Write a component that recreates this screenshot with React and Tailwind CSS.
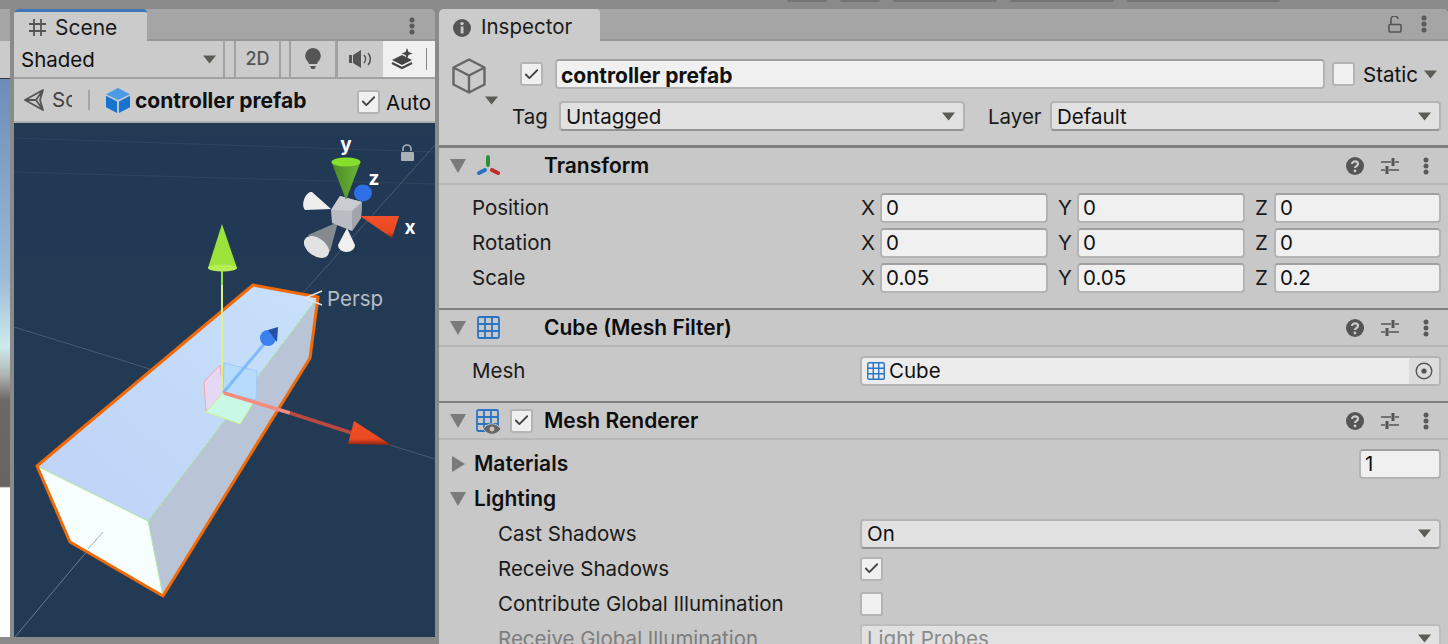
import { Check } from 'lucide-react'

function Arrow({ className = '' }) {
  return (
    <svg width="13" height="9" viewBox="0 0 13 9" className={className}>
      <path d="M0 0.5H13L6.5 8.5Z" fill="#5c5c57" />
    </svg>
  )
}

function Foldout({ open = true }) {
  return (
    <svg width="16" height="16" viewBox="0 0 16 16" className="shrink-0">
      {open
        ? <path d="M0 1H16L8 15Z" fill="#7b7b7b" />
        : <path d="M2 0L15 8L2 16Z" fill="#7b7b7b" />}
    </svg>
  )
}

function Dots({ className = '' }) {
  return (
    <svg width="6" height="18" viewBox="0 0 6 18" className={className}>
      <circle cx="3" cy="3" r="2.5" fill="#5a5a5a" />
      <circle cx="3" cy="9" r="2.5" fill="#5a5a5a" />
      <circle cx="3" cy="15" r="2.5" fill="#5a5a5a" />
    </svg>
  )
}

function Checkbox({ checked }) {
  return (
    <div className="w-[23px] h-[24px] shrink-0 rounded-[3px] border-2 border-[#b4b4b4] bg-[#f0f0f0] flex items-center justify-center">
      {checked && <Check size={17} strokeWidth={2.6} color="#444" />}
    </div>
  )
}

function GridIcon({ size = 23, color = '#2a74c4' }) {
  return (
    <svg width={size} height={size} viewBox="0 0 23 23" className="shrink-0">
      <rect x="1" y="1" width="21" height="21" rx="1.5" fill="none" stroke={color} strokeWidth="1.8" />
      <path d="M8 1V22M15 1V22M1 8H22M1 15H22" stroke={color} strokeWidth="1.8" />
    </svg>
  )
}

function HeaderIcons() {
  return (
    <div className="ml-auto flex items-center">
      <svg width="18" height="18" viewBox="0 0 18 18">
        <circle cx="9" cy="9" r="9" fill="#555" />
        <path d="M6 7C6 3.6 12 3.6 12 7C12 9 9 9 9 11" fill="none" stroke="#cbcbcb" strokeWidth="2.2" />
        <circle cx="9" cy="14" r="1.4" fill="#cbcbcb" />
      </svg>
      <svg width="18" height="18" viewBox="0 0 18 18" className="ml-[17px]">
        <path d="M0 5H10M14 5H18M0 13H4M8 13H18" stroke="#555" strokeWidth="1.6" />
        <rect x="10.5" y="1" width="3" height="8" fill="#555" />
        <rect x="4.5" y="9" width="3" height="8" fill="#555" />
      </svg>
      <Dots className="ml-[24px] mr-[19px]" />
    </div>
  )
}

function ComponentHeader({ icon, title, check }) {
  return (
    <div className="h-[35px] flex items-center pl-[11px] border-b-2 border-[#b7b7b7] box-content">
      <Foldout />
      <div className="w-[24px] ml-[10px] flex justify-center shrink-0">{icon}</div>
      <div className="w-[44px] shrink-0 pl-[10px]">{check && <Checkbox checked />}</div>
      <span className="font-semibold text-[21px] text-[#0d0d0d] whitespace-nowrap">{title}</span>
      <HeaderIcons />
    </div>
  )
}

function Field({ children, className = '' }) {
  return (
    <div className={`h-[30px] rounded-[4px] border-2 border-[#b4b4b4] border-t-[#a0a0a0] bg-[#f0f0f0] flex items-center pt-[2px] pl-[4px] text-[#111] ${className}`}>
      {children}
    </div>
  )
}

function Select({ value, className = '', muted }) {
  return (
    <div className={`h-[30px] rounded-[4px] border-2 border-[#b4b4b4] border-b-[#949494] bg-[#e1e1e1] flex items-center pl-[5px] pr-[8px] justify-between ${muted ? 'text-[#8a8a8a]' : 'text-[#111]'} ${className}`}>
      <span className="pt-[2px]">{value}</span>
      <Arrow />
    </div>
  )
}

function VecRow({ label, x, y, z }) {
  return (
    <div className="h-[35px] flex items-center pl-[33px] text-[#1a1a1a]">
      <span className="w-[388px] pt-[2px] shrink-0">{label}</span>
      {[['X', x, 'w-[168px]'], ['Y', y, 'w-[168px]'], ['Z', z, 'w-[167px]']].map(([axis, v, w]) => (
        <div key={axis} className="flex items-center w-[197px] flex-none">
          <span className="w-[20px] pl-[1px] pt-[2px] shrink-0">{axis}</span>
          <Field className={w}>{v}</Field>
        </div>
      ))}
    </div>
  )
}

function PropRow({ label, indent, muted, children }) {
  return (
    <div className={`h-[35px] flex items-center pr-[7px] ${indent ? 'pl-[59px]' : 'pl-[33px]'} ${muted ? 'text-[#7d7d7d]' : 'text-[#1a1a1a]'}`}>
      <span className={`${indent ? 'w-[362px]' : 'w-[388px]'} pt-[2px] shrink-0`}>{label}</span>
      <div className="grow">{children}</div>
    </div>
  )
}

function SceneView() {
  return (
    <div className="relative grow bg-[#223a54] overflow-hidden">
      <svg viewBox="14 123 421 514" className="absolute inset-0 w-full h-full">
        <defs>
          <linearGradient id="top" x1="0" y1="1" x2="1" y2="0">
            <stop offset="0" stopColor="#bed2f7" />
            <stop offset="1" stopColor="#c8e0fb" />
          </linearGradient>
          <linearGradient id="redcone" x1="0" y1="0" x2="0" y2="1">
            <stop offset="0" stopColor="#f2502a" />
            <stop offset="0.75" stopColor="#ea4820" />
            <stop offset="1" stopColor="#8e2412" />
          </linearGradient>
          <linearGradient id="greencone" x1="0" y1="0" x2="1" y2="0">
            <stop offset="0" stopColor="#4b8a25" />
            <stop offset="1" stopColor="#6cb536" />
          </linearGradient>
        </defs>
        {/* grid */}
        <g stroke="#5a6b7e" strokeWidth="1" opacity="0.7">
          <path d="M14 327L150 369M390 445L435 459" />
          <path d="M15 637L103 532" stroke="#8b97a4" />
          <path d="M435 145L303 293" />
          <path d="M14 138L435 152M14 172L435 184" opacity="0.35" />
        </g>
        {/* box */}
        <path d="M37 466L253 285L318 297L148 521Z" fill="url(#top)" />
        <path d="M148 521L318 297L310 358L163 596Z" fill="#b9c5d6" />
        <path d="M37 466L148 521L163 596L70 542Z" fill="#f6fffd" />
        <path d="M103 532L88 549" stroke="#aab0b6" strokeWidth="1" />
        <path d="M37 466L148 521L318 297M148 521L163 596" fill="none" stroke="#b4f0ab" strokeWidth="1" />
        <path d="M37 466L253 285L318 297L310 358L163 596L70 542Z" fill="none" stroke="#f06a08" strokeWidth="3" strokeLinejoin="round" />
        {/* move handles */}
        <path d="M204 382L220 365L223 393L206 412Z" fill="#e4d8f4" stroke="#f5a8a8" />
        <path d="M224 363L257 371L256 400L223 393Z" fill="#b7dcfb" stroke="#9dc8f8" />
        <path d="M223 393L253 403L240 424L206 412Z" fill="#c9f9e6" stroke="#cdf58a" />
        <path d="M222 393V262" stroke="#d6f58f" strokeWidth="2" />
        <path d="M222 285V262" stroke="#92e24a" strokeWidth="2" />
        <path d="M223 393L270 337" stroke="#80bafa" strokeWidth="3" />
        <path d="M224 393L290 413" stroke="#f58a80" strokeWidth="3.5" />
        <path d="M290 413L355 434" stroke="#b9483f" strokeWidth="3.5" />
        <path d="M208 268L222 224L237 268Z" fill="#9be23a" />
        <ellipse cx="222.5" cy="268" rx="14.5" ry="3.5" fill="#b5ee55" />
        <circle cx="268" cy="338" r="8" fill="#3a80ee" />
        <path d="M268 330L278 327L277 342Z" fill="#234fa8" />
        <path d="M354 421L391 445L348 444Z" fill="url(#redcone)" />
        {/* orientation gizmo */}
        <ellipse cx="363" cy="193" rx="9" ry="8.5" fill="#2f6fe6" />
        <path d="M331 209L312 192A6 10 15 0 0 305 210Z" fill="#eeeeee" />
        <path d="M338 222L308 235L330 252Z" fill="#858a90" />
        <ellipse cx="316.5" cy="247" rx="14" ry="9" transform="rotate(35 316.5 247)" fill="#e2e2e2" />
        <path d="M347 228L338 245A8.5 7 0 0 0 355 245Z" fill="#f0f0f0" />
        <path d="M331 210L340 196L362 202L361 218L352 231L332 223Z" fill="#b9bcc2" />
        <path d="M340 196L362 202L352 211L331 210Z" fill="#c9ccd1" />
        <path d="M362 202L361 218L352 231V211Z" fill="#a1a4aa" />
        <path d="M331.5 162L346 200L360.5 162Z" fill="url(#greencone)" />
        <ellipse cx="346" cy="162" rx="14.5" ry="4.5" fill="#84e02c" />
        <path d="M360 216L399 216L392 238Z" fill="url(#redcone)" />
        {/* scene lock */}
        <path d="M403 151V149A4 4 0 0 1 411 149V151" fill="none" stroke="#a8b0b8" strokeWidth="1.6" />
        <rect x="401" y="152" width="13" height="9" rx="1" fill="#a8b0b8" />
        {/* persp marks */}
        <path d="M322 291L305 298L322 305" fill="none" stroke="#dfe5ea" strokeWidth="1.4" />
      </svg>
      <span className="absolute left-[332px] top-[12px] font-bold text-[19px] leading-none text-white -translate-x-1/2">y</span>
      <span className="absolute left-[360px] top-[46px] font-bold text-[19px] leading-none text-white -translate-x-1/2">z</span>
      <span className="absolute left-[396px] top-[95px] font-bold text-[19px] leading-none text-white -translate-x-1/2">x</span>
      <span className="absolute left-[313px] top-[166px] text-[#b6bec6] leading-none">Persp</span>
    </div>
  )
}

function ScenePanel() {
  return (
    <div className="w-[421px] mb-[7px] shrink-0 flex flex-col rounded-t-[5px] overflow-hidden">
      <div className="h-[30px] shrink-0 flex bg-[#a5a5a5] border-b-[2px] border-[#969696] box-content">
        <div className="w-[133px] h-[32px] bg-[#cbcbcb] border-t-[3px] border-[#3f78b8] flex items-center pt-[2px] pl-[15px] rounded-t-[4px]">
          <svg width="17" height="17" viewBox="0 0 17 17">
            <path d="M5 0V17M12 0V17M0 5H17M0 12H17" stroke="#555" strokeWidth="1.8" />
          </svg>
          <span className="ml-[9px] text-[21px] text-[#1a1a1a]">Scene</span>
        </div>
        <Dots className="ml-auto mr-[20px] mt-[8px]" />
      </div>
      <div className="h-[36px] shrink-0 flex items-stretch bg-[#cbcbcb] border-b-2 border-[#a2a2a2] box-content text-[#111]">
        <div className="w-[211px] flex items-center justify-between pl-[7px] pr-[7px] border-r-2 border-[#a2a2a2]">
          <span className="pt-[2px]">Shaded</span>
          <Arrow />
        </div>
        <div className="w-[11px] border-r-2 border-[#a2a2a2]" />
        <div className="w-[45px] flex items-center justify-center border-r-2 border-[#a2a2a2] text-[#555] font-medium text-[18px]">2D</div>
        <div className="w-[10px] border-r-2 border-[#a2a2a2]" />
        <div className="w-[47px] flex items-center justify-center border-r-[3px] border-[#a2a2a2]">
          <svg width="16" height="22" viewBox="0 0 16 22">
            <path d="M8 0A8 8 0 0 1 13 14L12 16H4L3 14A8 8 0 0 1 8 0Z" fill="#555" />
            <path d="M5 18H11L9.5 21H6.5Z" fill="#555" />
          </svg>
        </div>
        <div className="w-[45px] flex items-center justify-center">
          <svg width="23" height="18" viewBox="0 0 23 18">
            <path d="M0 5H3V13H0ZM4 5L12 0V18L4 13Z" fill="#555" />
            <path d="M15 5A6 6 0 0 1 15 13M19 3A9 9 0 0 1 19 15" fill="none" stroke="#555" strokeWidth="1.6" />
          </svg>
        </div>
        <div className="grow bg-[#f0f0f0] flex items-center pl-[8px]">
          <svg width="23" height="22" viewBox="0 0 23 22">
            <path d="M1 12L11 7L21 12L11 17Z" fill="#444" />
            <path d="M1 15L11 20L21 15" fill="none" stroke="#444" strokeWidth="2.2" />
            <path d="M16 0L17.5 4L21.5 5.5L17.5 7L16 11L14.5 7L10.5 5.5L14.5 4Z" fill="#444" />
          </svg>
          <div className="ml-[12px] w-[1px] h-[22px] bg-[#888]" />
        </div>
      </div>
      <div className="h-[42px] shrink-0 flex items-center bg-[#cbcbcb] border-b-2 border-[#aeaeae] box-content">
        <svg width="22" height="22" viewBox="0 0 22 22" className="ml-[9px] shrink-0">
          <path d="M20 1L2 11L20 21L17 11Z M2 11H13 M13 11L20 1 M13 11L20 21" fill="none" stroke="#555" strokeWidth="1.8" strokeLinejoin="round" />
        </svg>
        <span className="ml-[7px] w-[20px] overflow-hidden text-[#444] whitespace-nowrap">Scene</span>
        <div className="ml-[16px] w-[2px] h-[20px] bg-[#a5a5a5]" />
        <svg width="24" height="25" viewBox="0 0 25 26" className="ml-[16px] shrink-0">
          <path d="M12.5 0L25 6.5L12.5 12.5L0 6.5Z" fill="#4a9ae6" />
          <path d="M0 8L11.5 14V26L0 20Z" fill="#1673d2" />
          <path d="M25 8L13.5 14V26L25 20Z" fill="#1673d2" />
        </svg>
        <span className="ml-[5px] font-bold text-[21px] text-[#111] whitespace-nowrap">controller prefab</span>
        <div className="ml-auto flex items-center pt-[3px]">
          <Checkbox checked />
          <span className="ml-[6px] mr-[4px] pt-[4px] text-[#111]">Auto</span>
        </div>
      </div>
      <SceneView />
    </div>
  )
}

function InspectorPanel() {
  return (
    <div className="grow min-w-0 bg-[#c8c8c8] rounded-t-[5px] overflow-hidden">
      <div className="h-[30px] flex items-center bg-[#a5a5a5] border-b-[2px] border-[#969696] box-content">
        <div className="w-[161px] h-[32px] self-start bg-[#cbcbcb] flex items-center pt-[5px] pl-[14px] rounded-t-[4px]">
          <svg width="18" height="18" viewBox="0 0 18 18">
            <circle cx="9" cy="9" r="9" fill="#555" />
            <rect x="7.7" y="7.5" width="2.8" height="7" fill="#cbcbcb" />
            <circle cx="9" cy="4.6" r="1.7" fill="#cbcbcb" />
          </svg>
          <span className="ml-[10px] text-[#1a1a1a]">Inspector</span>
        </div>
        <svg width="14" height="17" viewBox="0 0 14 17" className="ml-auto">
          <path d="M3 8V4A3.5 3.5 0 0 1 10 3" fill="none" stroke="#555" strokeWidth="1.6" />
          <rect x="1" y="8.5" width="12" height="7.5" rx="1" fill="none" stroke="#555" strokeWidth="1.6" />
        </svg>
        <Dots className="ml-[19px] mr-[21px]" />
      </div>
      <div className="h-[104px] bg-[#cbcbcb] relative pt-[18px]">
        <div className="flex items-center h-[30px]">
          <svg width="34" height="36" viewBox="0 0 34 36" className="ml-[13px] mt-[3px] shrink-0">
            <path d="M17 1.5L32.5 9.5V26.5L17 34.5L1.5 26.5V9.5Z M1.5 9.5L17 17.5L32.5 9.5 M17 17.5V34.5" fill="none" stroke="#666" strokeWidth="2.4" strokeLinejoin="round" />
          </svg>
          <div className="ml-[34px]"><Checkbox checked /></div>
          <Field className="ml-[12px] w-[770px] font-bold text-[21px]">controller prefab</Field>
          <div className="ml-[7px]"><Checkbox /></div>
          <span className="ml-[8px] pt-[2px] text-[#111]">Static</span>
          <Arrow className="ml-[6px]" />
        </div>
        <Arrow className="absolute left-[46px] top-[55px]" />
        <div className="flex items-center h-[30px] mt-[12px] text-[#1a1a1a]">
          <span className="ml-[73px] w-[47px] pt-[2px]">Tag</span>
          <Select value="Untagged" className="w-[406px]" />
          <span className="ml-[23px] w-[62px] pt-[2px]">Layer</span>
          <Select value="Default" className="w-[391px]" />
        </div>
      </div>
      <div className="h-[3px] bg-[#7f7f7f]" />
      <ComponentHeader
        title="Transform"
        icon={
          <svg width="24" height="22" viewBox="0 0 24 22">
            <path d="M12 2V10" stroke="#2f8f3a" strokeWidth="4" strokeLinecap="round" />
            <path d="M9 15L3 18" stroke="#2a74c4" strokeWidth="4" strokeLinecap="round" />
            <path d="M16 15L22 18" stroke="#c22d2d" strokeWidth="4" strokeLinecap="round" />
          </svg>
        }
      />
      <div className="pt-[5px] pb-[13px]">
        <VecRow label="Position" x="0" y="0" z="0" />
        <VecRow label="Rotation" x="0" y="0" z="0" />
        <VecRow label="Scale" x="0.05" y="0.05" z="0.2" />
      </div>
      <div className="h-[2px] bg-[#7f7f7f]" />
      <ComponentHeader title="Cube (Mesh Filter)" icon={<GridIcon />} />
      <div className="pt-[6px] pb-[13px]">
        <PropRow label="Mesh">
          <div className="h-[30px] rounded-[4px] border-2 border-[#b4b4b4] bg-[#ececec] flex items-center pl-[5px] text-[#111]">
            <GridIcon size={18} />
            <span className="ml-[4px] pt-[2px]">Cube</span>
            <div className="ml-auto w-[30px] h-full bg-[#dcdcdc] rounded-r-[3px] flex items-center justify-center">
              <svg width="18" height="18" viewBox="0 0 18 18">
                <circle cx="9" cy="9" r="7.8" fill="none" stroke="#555" strokeWidth="1.4" />
                <circle cx="9" cy="9" r="2.6" fill="#555" />
              </svg>
            </div>
          </div>
        </PropRow>
      </div>
      <div className="h-[2px] bg-[#7f7f7f]" />
      <ComponentHeader
        title="Mesh Renderer"
        check
        icon={
          <div className="relative w-[24px] h-[24px]">
            <GridIcon />
            <svg width="18" height="12" viewBox="0 0 18 12" className="absolute left-[7px] top-[14px]">
              <path d="M0 6C5 -1 13 -1 18 6C13 13 5 13 0 6Z" fill="#666" stroke="#c8c8c8" />
              <circle cx="9" cy="6" r="2.4" fill="#c8c8c8" />
            </svg>
          </div>
        }
      />
      <div className="pt-[6px]">
        <div className="h-[35px] flex items-center pl-[11px] pr-[7px] font-semibold text-[21px] text-[#111]">
          <Foldout open={false} />
          <span className="ml-[8px]">Materials</span>
          <Field className="ml-auto w-[82px] font-normal text-[20.5px]">1</Field>
        </div>
        <div className="h-[35px] flex items-center pl-[11px] font-semibold text-[21px] text-[#111]">
          <Foldout />
          <span className="ml-[8px]">Lighting</span>
        </div>
        <PropRow label="Cast Shadows" indent>
          <Select value="On" />
        </PropRow>
        <PropRow label="Receive Shadows" indent>
          <Checkbox checked />
        </PropRow>
        <PropRow label="Contribute Global Illumination" indent>
          <Checkbox />
        </PropRow>
        <PropRow label="Receive Global Illumination" indent muted>
          <Select value="Light Probes" muted className="bg-[#cfcfcf] border-[#bdbdbd] border-b-[#bdbdbd]" />
        </PropRow>
      </div>
    </div>
  )
}

export default function App() {
  return (
    <div className='w-[1448px] h-[644px] overflow-hidden bg-[#8a8a8a] flex flex-col text-[20.5px] leading-none font-["Inter",sans-serif]'>
      {/* tabs of the window above, only their lower edge shows */}
      <div className="h-[9px] shrink-0 flex items-start pl-[787px]">
        <div className="w-[40px] h-[2px] bg-[#747474] rounded-b-[2px]" />
        <div className="ml-[13px] w-[40px] h-[2px] bg-[#747474] rounded-b-[2px]" />
        <div className="ml-[13px] w-[104px] h-[2px] bg-[#747474] rounded-b-[2px]" />
        <div className="ml-[13px] w-[104px] h-[2px] bg-[#747474] rounded-b-[2px]" />
        <div className="ml-[13px] w-[153px] h-[2px] bg-[#747474] rounded-b-[2px]" />
      </div>
      <div className="grow min-h-0 flex">
        <div className="w-[10px] mr-[4px] mb-[7px] shrink-0 flex flex-col">
          <div className="h-[32px] shrink-0 bg-[#a5a5a5]" />
          <div className="h-[38px] shrink-0 bg-[#cbcbcb] border-b border-[#333]" />
          <div className="grow bg-[linear-gradient(to_bottom,#6d8cb8_0%,#9dbcd8_36%,#cfeaec_48%,#b0b5b4_53%,#6e6864_57.5%,#6a6460_73%,#ffffff_73.3%,#ffffff_100%)]" />
        </div>
        <ScenePanel />
        <div className="w-[4px] shrink-0" />
        <InspectorPanel />
      </div>
    </div>
  )
}
